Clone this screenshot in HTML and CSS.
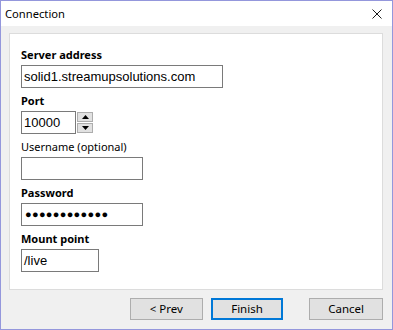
FILE: index.html
```html
<!DOCTYPE html>
<html>
<head>
<meta charset="utf-8">
<link rel="stylesheet" href="styles.css">
</head>
<body>
<div class="window">
  <div class="titlebar">
    <span class="title">Connection</span>
    <span class="close">
      <svg width="10" height="10" viewBox="0 0 10 10"><path d="M0.5 0.5L9.5 9.5M9.5 0.5L0.5 9.5" stroke="#1a1a1a" stroke-width="1" fill="none"/></svg>
    </span>
  </div>
  <div class="content">
    <div class="panel">
      <div class="field">
        <div class="label bold">Server address</div>
        <div class="input w-server">solid1.streamupsolutions.com</div>
      </div>
      <div class="field">
        <div class="label bold">Port</div>
        <div class="port-row">
          <div class="input w-port">10000</div>
          <div class="spinner">
            <div class="spin-btn"><svg width="7" height="4" viewBox="0 0 7 4"><path d="M3.5 0L7 4H0z" fill="#000"/></svg></div>
            <div class="spin-btn"><svg width="7" height="4" viewBox="0 0 7 4"><path d="M0 0H7L3.5 4z" fill="#000"/></svg></div>
          </div>
        </div>
      </div>
      <div class="field">
        <div class="label">Username (optional)</div>
        <div class="input w-user"></div>
      </div>
      <div class="field">
        <div class="label bold">Password</div>
        <div class="input w-user dots">●●●●●●●●●●●●</div>
      </div>
      <div class="field">
        <div class="label bold">Mount point</div>
        <div class="input w-mount">/live</div>
      </div>
    </div>
    <div class="buttons">
      <div class="btn">&lt; Prev</div>
      <div class="btn default">Finish</div>
      <div class="btn cancel">Cancel</div>
    </div>
  </div>
</div>
</body>
</html>
```

FILE: styles.css
```css
* { box-sizing: border-box; }
html, body { margin: 0; padding: 0; background: #f0f0f0; }
.window {
  width: 393px;
  height: 330px;
  border: 1px solid #9497dc;
  background: #f0f0f0;
  display: flex;
  flex-direction: column;
  font-family: "Noto Sans", "Open Sans", sans-serif;
  font-size: 11px;
  color: #000;
}
.titlebar {
  height: 25px;
  background: #fff;
  display: flex;
  align-items: center;
  justify-content: space-between;
  padding: 0 10px 0 4px;
}
.title { font-size: 11.2px; line-height: 16px; }
.close { display: flex; width: 10px; height: 10px; margin-top: 1px; }
.content {
  flex: 1;
  display: flex;
  flex-direction: column;
  padding: 7px 9px 0 8px;
}
.panel {
  height: 257px;
  background: #fff;
  border: 1px solid #dcdcdc;
  padding: 13px 11px 0 11px;
  display: flex;
  flex-direction: column;
  gap: 5px;
}
.field { display: flex; flex-direction: column; gap: 2px; }
.label { line-height: 16px; height: 16px; white-space: nowrap; }
.bold { font-weight: 700; }
.input {
  height: 23px;
  border: 1px solid #7a7a7a;
  background: #fff;
  font-family: "Liberation Sans", Arial, sans-serif;
  font-size: 13px;
  line-height: 21px;
  padding: 0 2px;
  white-space: nowrap;
  overflow: hidden;
}
.w-server { width: 202px; }
.w-port { width: 55px; }
.w-user { width: 122px; }
.w-mount { width: 78px; }
.dots { font-size: 11px; letter-spacing: 0.3px; padding-left: 3px; }
.port-row { display: flex; gap: 1px; align-items: flex-start; }
.spinner { display: flex; flex-direction: column; gap: 1px; padding-top: 1px; }
.spin-btn {
  width: 16px;
  height: 10px;
  background: #e1e1e1;
  border: 1px solid #adadad;
  display: flex;
  align-items: center;
  justify-content: center;
}
.buttons {
  display: flex;
  margin-top: 8px;
  padding-left: 121px;
  gap: 8px;
}
.btn {
  width: 73px;
  height: 22px;
  background: #e1e1e1;
  border: 1px solid #adadad;
  display: flex;
  align-items: center;
  justify-content: center;
  line-height: 16px;
  font-size: 11.5px;
}
.btn.default { border: 2px solid #0078d7; }
.btn.cancel { margin-left: 18px; width: 74px; }
```
